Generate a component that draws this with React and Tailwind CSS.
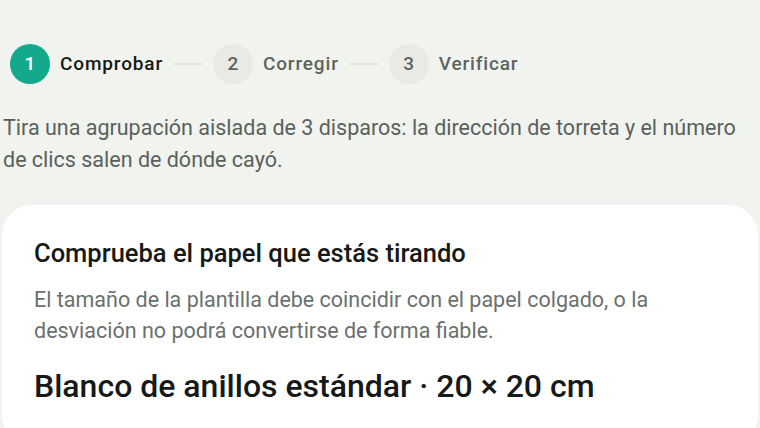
import React from 'react';

const steps = [
    { n: 1, label: 'Comprobar', active: true },
    { n: 2, label: 'Corregir' },
    { n: 3, label: 'Verificar' },
];

const Stepper = () => (
    <div className="flex items-center pl-[10px]">
        {steps.map((s, i) => (
            <React.Fragment key={s.n}>
                {i > 0 && <div className="mx-[10px] h-[2px] w-[30px] bg-[#e2e5e0]" />}
                <div className="flex items-center gap-[10px]">
                    <div
                        className={
                            s.active
                                ? 'flex h-[40px] w-[40px] items-center justify-center rounded-full bg-[#13a98a] text-[19px] font-medium text-white'
                                : 'flex h-[40px] w-[40px] items-center justify-center rounded-full bg-[#e8eae6] text-[19px] font-medium text-[#5d6460]'
                        }
                    >
                        {s.n}
                    </div>
                    <span
                        className={
                            s.active
                                ? 'text-[19px] font-medium tracking-[0.85px] text-[#151917]'
                                : 'text-[19px] font-medium tracking-[0.85px] text-[#5d6460]'
                        }
                    >
                        {s.label}
                    </span>
                </div>
            </React.Fragment>
        ))}
    </div>
);

export default function App() {
    return (
        <div className="h-[428px] w-[760px] overflow-hidden bg-[#f1f3ef] font-['Roboto',sans-serif]">
            <div className="pt-[44px]">
                <Stepper />
            </div>

            <p className="mt-[28px] pl-[3px] pr-[12px] text-[21.5px] leading-[32px] text-[#5a615d]">
                Tira una agrupación aislada de 3 disparos: la dirección de torreta y el número de clics salen de dónde cayó.
            </p>

            <div className="mx-[2px] mt-[29px] rounded-[30px] bg-white px-[32px] pt-[32px] pb-[40px]">
                <h2 className="text-[25.5px] font-medium leading-[32px] text-[#151917]">
                    Comprueba el papel que estás tirando
                </h2>
                <p className="mt-[15px] pr-[60px] text-[21.5px] leading-[31px] text-[#6a716d]">
                    El tamaño de la plantilla debe coincidir con el papel colgado, o la desviación no podrá convertirse de forma fiable.
                </p>
                <h3 className="mt-[20px] text-[32px] font-medium leading-[40px] text-[#151917]">
                    Blanco de anillos estándar · 20 × 20 cm
                </h3>
            </div>
        </div>
    );
}
